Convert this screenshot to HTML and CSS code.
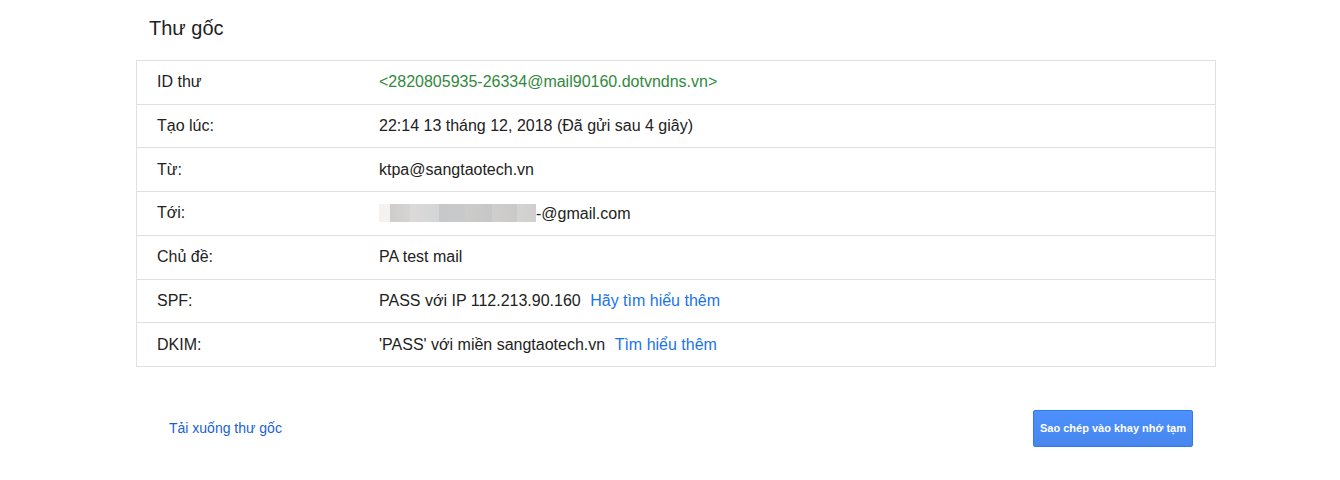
FILE: index.html
```html
<!DOCTYPE html>
<html>
  <head>
    <meta charset=utf-8>
    <title>Thư gốc</title>
    <link rel="stylesheet" href="styles.css">
  </head>
  <body>
    <div id="page">
      <h2 class="title">Thư gốc</h2>
      <div class="details">
        <div class="row">
          <p class="label">ID thư</p>
          <p class="value msgid">&lt;2820805935-26334@mail90160.dotvndns.vn&gt;</p>
        </div>
        <div class="row">
          <p class="label">Tạo lúc:</p>
          <p class="value">22:14 13 tháng 12, 2018 (Đã gửi sau 4 giây)</p>
        </div>
        <div class="row">
          <p class="label">Từ:</p>
          <p class="value">ktpa@sangtaotech.vn</p>
        </div>
        <div class="row">
          <p class="label">Tới:</p>
          <p class="value"><span class="blur"></span>-@gmail.com</p>
        </div>
        <div class="row">
          <p class="label">Chủ đề:</p>
          <p class="value">PA test mail</p>
        </div>
        <div class="row">
          <p class="label">SPF:</p>
          <p class="value">PASS với IP 112.213.90.160 <a class="more" href="#">Hãy tìm hiểu thêm</a></p>
        </div>
        <div class="row">
          <p class="label">DKIM:</p>
          <p class="value">'PASS' với miền sangtaotech.vn <a class="more" href="#">Tìm hiểu thêm</a></p>
        </div>
      </div>
      <div class="footer">
        <a class="download" href="#">Tải xuống thư gốc</a>
        <button class="copy">Sao chép vào khay nhớ tạm</button>
      </div>
    </div>
  </body>
</html>
```

FILE: styles.css
```css
body {
  margin: 0;
  font-family: "Liberation Sans", Arial, sans-serif;
  color: #222;
  background: #fff;
}
p {
  margin: 0;
}
#page {
  width: 1080px;
  margin-left: 136px;
}
.title {
  font-weight: normal;
  font-size: 20px;
  line-height: 24px;
  margin: 0 0 20px 13px;
  padding-top: 16px;
  color: #222;
}
.details {
  border: 1px solid #e0e0e0;
}
.row {
  display: flex;
  align-items: center;
  height: 42.71px;
  padding: 0 20px;
  font-size: 16px;
}
.row + .row {
  border-top: 1px solid #e0e0e0;
}
.label {
  width: 222px;
  flex: none;
}
.msgid {
  color: #30893c;
}
.more {
  color: #1a73e8;
  text-decoration: none;
  margin-left: 5px;
}
.blur {
  display: inline-block;
  vertical-align: -3px;
  width: 157px;
  height: 18px;
  background: linear-gradient(90deg, #f4f1ef 0, #f4f1ef 7%, #cfcdcc 7%, #d6d4d3 20%, #dcdad9 20%, #d3d5d6 38%, #c9c8c8 38%, #c7c9ca 55%, #cdcccb 55%, #c5c6c6 72%, #d0cecd 72%, #c9c9c9 88%, #d5d4d3 88%, #cfcfcf 100%);
}
.footer {
  display: flex;
  justify-content: space-between;
  align-items: center;
  margin-top: 43px;
  padding: 0 23px 0 33px;
}
.download {
  color: #1a5fd6;
  text-decoration: none;
  font-size: 14px;
}
.copy {
  height: 37px;
  width: 160px;
  padding: 0;
  border: 1px solid #3079ed;
  border-radius: 2px;
  background: linear-gradient(#4d90fe, #4787ed);
  color: #fff;
  font-family: "Liberation Sans", Arial, sans-serif;
  font-weight: bold;
  font-size: 11px;
}
```
